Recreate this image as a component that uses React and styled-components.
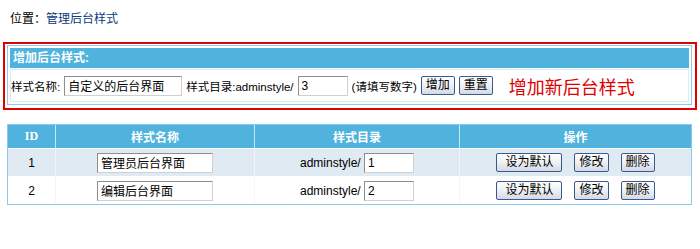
import styled, { createGlobalStyle } from 'styled-components'

const GlobalStyle = createGlobalStyle`
  body {
    margin: 0;
    background: #fff;
    color: #000;
    font-family: "Liberation Sans", "Noto Sans CJK SC", sans-serif;
    font-size: 12px;
  }
`
const Page = styled.div`
  width: 700px;
  padding: 10px 3px 0;
  box-sizing: border-box;
`
const Crumb = styled.div`
  height: 18px;
  line-height: 18px;
  padding-left: 7px;
  margin-bottom: 14px;
`
const CrumbLink = styled.span`
  color: #0b3a7e;
`
const RedBox = styled.div`
  border: 2px solid #e00000;
  padding: 1px 3px 3px 2px;
`
const AddPanel = styled.div`
  border: 1px solid #8ccbe8;
  padding: 2px;
`
const PanelHead = styled.div`
  height: 20px;
  line-height: 20px;
  background: #4fb3de;
  color: #fff;
  font-weight: bold;
  font-size: 12px;
  padding-left: 3px;
`
const PanelRow = styled.div`
  display: flex;
  align-items: center;
  height: 31px;
  margin-top: 1px;
  border: 1px solid #d7ecf7;
  padding-left: 0;
  gap: 4px;
  font-size: 11.5px;
`
const Input = styled.input`
  width: ${p => p.$w}px;
  height: 20px;
  box-sizing: border-box;
  border: 1px solid #8e8e8e;
  border-right-color: #d0d0d0;
  border-bottom-color: #d0d0d0;
  padding: 0 3px;
  font-family: "Liberation Sans", "Noto Sans CJK SC", sans-serif;
  font-size: 12px;
  color: #000;
  background: #fff;
`
const Button = styled.button`
  height: 19px;
  box-sizing: border-box;
  padding: 0 ${p => (p.$wide ? 8 : 4)}px;
  border: 1px solid #3a5a8c;
  border-radius: 2px;
  background: linear-gradient(#ffffff, #eef0f4 50%, #d3d9e4);
  font-family: "Liberation Sans", "Noto Sans CJK SC", sans-serif;
  font-size: 12px;
  line-height: 17px;
  color: #000;
  cursor: pointer;
`
const Hint = styled.span`
  margin-left: 12px;
  color: #e00000;
  font-size: 18px;
`
const Table = styled.table`
  margin: 14px 0 0 4px;
  width: 685px;
  border: 1px solid #8ccbe8;
  border-collapse: separate;
  border-spacing: 0;
  font-size: 12px;
`
const Th = styled.th`
  height: 23px;
  width: ${p => p.$w}px;
  padding: 0;
  background: #4fb3de;
  color: #fff;
  font-weight: bold;
  border-right: 1px solid #c9e6f4;
  font-family: "Liberation Serif", "Noto Sans CJK SC", serif;
  &:last-child { border-right: none; }
`
const Tr = styled.tr`
  background: ${p => (p.$alt ? '#e0eaf3' : '#fff')};
`
const Td = styled.td`
  height: 27px;
  padding: 0;
  text-align: center;
  border-top: 1px solid #fff;
  border-right: 1px solid #f2f6fa;
  &:last-child { border-right: none; }
`
const Ops = styled.div`
  display: flex;
  justify-content: center;
  gap: 12px;
`

const styles = [
  { id: 1, name: '管理员后台界面', dir: '1' },
  { id: 2, name: '编辑后台界面', dir: '2' },
]

export default function App() {
  return (
    <Page>
      <GlobalStyle />
      <Crumb>位置：<CrumbLink>管理后台样式</CrumbLink></Crumb>
      <RedBox>
        <AddPanel>
          <PanelHead>增加后台样式:</PanelHead>
          <PanelRow>
            <span>样式名称:</span>
            <Input $w={118} defaultValue="自定义的后台界面" />
            <span>样式目录:adminstyle/</span>
            <Input $w={50} defaultValue="3" />
            <span>(请填写数字)</span>
            <Button>增加</Button>
            <Button>重置</Button>
            <Hint>增加新后台样式</Hint>
          </PanelRow>
        </AddPanel>
      </RedBox>
      <Table>
        <thead>
          <tr>
            <Th $w={47}>ID</Th>
            <Th $w={198}>样式名称</Th>
            <Th $w={204}>样式目录</Th>
            <Th>操作</Th>
          </tr>
        </thead>
        <tbody>
          {styles.map((s, i) => (
            <Tr key={s.id} $alt={i === 0}>
              <Td>{s.id}</Td>
              <Td><Input $w={116} defaultValue={s.name} /></Td>
              <Td>adminstyle/ <Input $w={50} defaultValue={s.dir} /></Td>
              <Td>
                <Ops>
                  <Button $wide>设为默认</Button>
                  <Button>修改</Button>
                  <Button>删除</Button>
                </Ops>
              </Td>
            </Tr>
          ))}
        </tbody>
      </Table>
    </Page>
  )
}
